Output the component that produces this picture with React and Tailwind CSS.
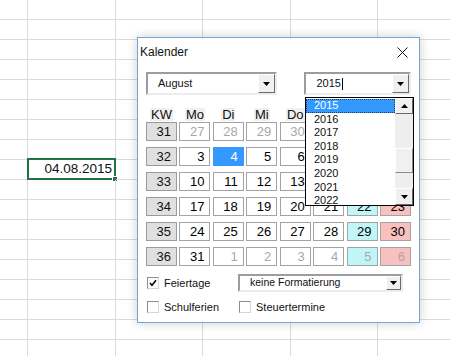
import React from "react";

const COL_WIDTHS = ["w-[28px]", "w-[88px]", "w-[87px]", "w-[88px]", "w-[87px]", "w-[88px]"];
const SHEET_ROWS = Array.from({ length: 18 }, (_, i) => i);

const HEADERS = ["KW", "Mo", "Di", "Mi", "Do", "Fr", "Sa", "So"];

const WEEKS = [
  { kw: 31, days: [27, 28, 29, 30, 31, 1, 2], gray: [0, 1, 2, 3, 4] },
  { kw: 32, days: [3, 4, 5, 6, 7, 8, 9], gray: [], selected: 1 },
  { kw: 33, days: [10, 11, 12, 13, 14, 15, 16], gray: [] },
  { kw: 34, days: [17, 18, 19, 20, 21, 22, 23], gray: [] },
  { kw: 35, days: [24, 25, 26, 27, 28, 29, 30], gray: [] },
  { kw: 36, days: [31, 1, 2, 3, 4, 5, 6], gray: [1, 2, 3, 4, 5, 6] },
];

const YEARS = [2015, 2016, 2017, 2018, 2019, 2020, 2021, 2022];

function Arrow({ up }) {
  return (
    <svg width="7" height="4" viewBox="0 0 7 4">
      <polygon points={up ? "0,4 7,4 3.5,0" : "0,0 7,0 3.5,4"} fill="#000" />
    </svg>
  );
}

function DropButton({ className }) {
  return (
    <div
      className={`flex items-center justify-center bg-[#f0f0f0] border border-t-white border-l-white border-b-[#6b6b6b] border-r-[#6b6b6b] ${className}`}
    >
      <Arrow />
    </div>
  );
}

function Check({ checked, label }) {
  return (
    <div className="flex items-center">
      <span className="w-[12px] h-[12px] border border-t-[#8c8c8c] border-l-[#8c8c8c] border-b-[#d6d6d6] border-r-[#d6d6d6] bg-white flex items-center justify-center">
        {checked && (
          <svg width="8" height="8" viewBox="0 0 8 8">
            <path d="M1 4 L3 6.2 L7 1.2" stroke="#000" strokeWidth="1.6" fill="none" />
          </svg>
        )}
      </span>
      <span className="ml-[5px] text-[11px] text-[#111]">{label}</span>
    </div>
  );
}

function DayCell({ value, gray, selected, col }) {
  let bg = "bg-white";
  if (col === 5) bg = "bg-[#c0f6f8]";
  if (col === 6) bg = "bg-[#f9c0c0]";
  if (selected) bg = "bg-[#3399ff]";
  let color = "text-black";
  if (gray) color = "text-[#a8a8a8]";
  if (selected) color = "text-white";
  return (
    <div
      className={`h-[19px] border ${selected ? "border-[#3399ff]" : "border-[#a3a3a3]"} ${bg} ${color} flex items-center justify-end pr-[5px] text-[13px]`}
    >
      {value}
    </div>
  );
}

export default function App() {
  return (
    <div className="relative w-[450px] h-[356px] overflow-hidden bg-white font-['Liberation_Sans',Arial,sans-serif]">
      {/* Spreadsheet grid */}
      <div className="flex flex-col">
        {SHEET_ROWS.map((r) => (
          <div key={r} className="flex h-[20px] shrink-0">
            {COL_WIDTHS.map((w, c) => (
              <div key={c} className={`${w} shrink-0 h-[20px] border-b border-r border-[#dadada] relative`}>
                {r === 8 && c === 1 && (
                  <>
                    <div className="h-full flex items-center justify-end pr-[3px] text-[13.5px] text-[#111]">
                      04.08.2015
                    </div>
                    <div className="absolute -left-[1px] -top-[2px] w-[89px] h-[22px] border-2 border-[#217346]">
                      <div className="absolute -right-[4px] -bottom-[4px] w-[6px] h-[6px] bg-[#217346] border border-white" />
                    </div>
                  </>
                )}
              </div>
            ))}
          </div>
        ))}
      </div>

      {/* Kalender dialog */}
      <div className="absolute left-[137px] top-[37px] w-[283px] h-[286px] bg-white border border-[#6ea7dc] shadow-[0_0_10px_rgba(0,0,0,0.2)] flex flex-col">
        <div className="h-[28px] flex items-center justify-between pl-[2px] pr-[11px]">
          <span className="text-[12px] text-[#111]">Kalender</span>
          <svg width="11" height="11" viewBox="0 0 11 11">
            <path d="M0.5 0.5 L10.5 10.5 M10.5 0.5 L0.5 10.5" stroke="#111" strokeWidth="1" />
          </svg>
        </div>

        <div className="px-[8px] flex flex-col">
          {/* month / year */}
          <div className="mt-[6px] flex h-[23px]">
            <div className="w-[132px] h-full bg-white border-2 border-t-[#9d9d9d] border-l-[#9d9d9d] border-b-[#ececec] border-r-[#ececec] flex items-center justify-between">
              <span className="pl-[10px] text-[11px] text-[#111]">August</span>
              <DropButton className="w-[17px] h-[19px]" />
            </div>
            <div className="ml-[27px] w-[107px] h-full bg-white border-2 border-t-[#9d9d9d] border-l-[#9d9d9d] border-b-[#ececec] border-r-[#ececec] flex items-center justify-between">
              <span className="pl-[10px] text-[11px] text-[#111] flex items-center">
                2015
                <span className="ml-[1px] w-[1px] h-[12px] bg-black" />
              </span>
              <DropButton className="w-[17px] h-[19px]" />
            </div>
          </div>

          {/* weekday headers */}
          <div className="mt-[13px] w-[265px] grid grid-cols-8 gap-x-[2.5px] h-[13px]">
            {HEADERS.map((h) => (
              <div key={h} className="flex justify-center">
                <span className="bg-[#f0f0f0] px-[1px] text-[13px] leading-[13px] text-[#111]">{h}</span>
              </div>
            ))}
          </div>

          {/* weeks */}
          <div className="mt-[1px] w-[265px] grid grid-cols-8 gap-x-[2.5px] gap-y-[6px]">
            {WEEKS.map((w) => (
              <React.Fragment key={w.kw}>
                <div className="h-[19px] border border-[#9a9a9a] bg-[#e0e0e0] flex items-center justify-end pr-[5px] text-[13px] text-[#111]">
                  {w.kw}
                </div>
                {w.days.map((d, i) => (
                  <DayCell
                    key={i}
                    value={d}
                    col={i}
                    gray={w.gray.includes(i)}
                    selected={w.selected === i}
                  />
                ))}
              </React.Fragment>
            ))}
          </div>

          {/* options */}
          <div className="mt-[8px] h-[18px] flex items-center">
            <div className="w-[92px] pl-[1px]">
              <Check checked label="Feiertage" />
            </div>
            <div className="w-[165px] h-[18px] bg-white border-2 border-t-[#9d9d9d] border-l-[#9d9d9d] border-b-[#ececec] border-r-[#ececec] flex items-center justify-between">
              <span className="pl-[10px] text-[10.5px] text-[#111]">keine Formatierung</span>
              <DropButton className="w-[15px] h-[14px]" />
            </div>
          </div>
          <div className="mt-[6px] h-[18px] flex items-center">
            <div className="w-[92px] pl-[1px]">
              <Check label="Schulferien" />
            </div>
            <div className="pl-[1px]">
              <Check label="Steuertermine" />
            </div>
          </div>
        </div>

        {/* open year list */}
        <div className="absolute left-[167px] top-[59px] w-[109px] h-[109px] border border-black bg-white flex">
          <div className="flex-1 flex flex-col pt-[1px]">
            {YEARS.map((y) => (
              <div
                key={y}
                className={`h-[13.6px] leading-[13.6px] pl-[8px] text-[11px] ${
                  y === 2015 ? "bg-[#3399ff] text-white outline-1 outline-dotted outline-[#1b3e6b] -outline-offset-1" : "text-[#111]"
                }`}
              >
                {y}
              </div>
            ))}
          </div>
          <div className="w-[18px] flex flex-col bg-[#eeeeee]">
            <div className="h-[16px] bg-[#f0f0f0] border border-t-white border-l-white border-b-[#6b6b6b] border-r-[#6b6b6b] flex items-center justify-center">
              <Arrow up />
            </div>
            <div className="flex-1 flex flex-col">
              <div className="h-[34px]" />
              <div className="h-[25px] bg-[#f0f0f0] border border-t-white border-l-white border-b-[#8a8a8a] border-r-[#8a8a8a]" />
            </div>
            <div className="h-[17px] bg-[#f0f0f0] border border-t-white border-l-white border-b-[#6b6b6b] border-r-[#6b6b6b] flex items-center justify-center">
              <Arrow />
            </div>
          </div>
        </div>
      </div>
    </div>
  );
}
